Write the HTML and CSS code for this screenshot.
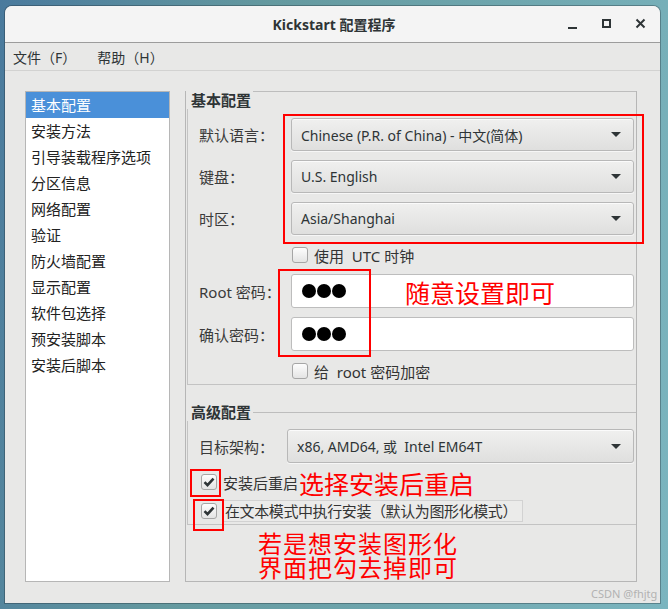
FILE: index.html
```html
<!DOCTYPE html>
<html lang="zh-CN">
<head>
    <meta charset="UTF-8">
    <title>Kickstart 配置程序</title>
    <link rel="stylesheet" href="styles.css">
</head>
<body>
<div class="window">
    <div class="titlebar">
        <span></span>
        <span class="title">Kickstart 配置程序</span>
        <div class="wbtns">
            <span class="wbtn"><svg width="12" height="12" viewBox="0 0 12 12"><path d="M1 10h9" stroke="#2e3436" stroke-width="2"/></svg></span>
            <span class="wbtn"><svg width="12" height="12" viewBox="0 0 12 12"><rect x="2" y="2" width="7" height="7" fill="none" stroke="#2e3436" stroke-width="2"/></svg></span>
            <span class="wbtn"><svg width="12" height="12" viewBox="0 0 12 12"><path d="M1.5 1.5l8 8M9.5 1.5l-8 8" stroke="#2e3436" stroke-width="2"/></svg></span>
        </div>
    </div>
    <div class="menubar">
        <span class="menu-item">文件（F）</span>
        <span class="menu-item">帮助（H）</span>
    </div>
    <div class="content">
        <div class="sidebar">
            <div class="nav-item active">基本配置</div>
            <div class="nav-item">安装方法</div>
            <div class="nav-item">引导装载程序选项</div>
            <div class="nav-item">分区信息</div>
            <div class="nav-item">网络配置</div>
            <div class="nav-item">验证</div>
            <div class="nav-item">防火墙配置</div>
            <div class="nav-item">显示配置</div>
            <div class="nav-item">软件包选择</div>
            <div class="nav-item">预安装脚本</div>
            <div class="nav-item">安装后脚本</div>
        </div>
        <div class="panel">
            <div class="group basic">
                <div class="group-head"><span>基本配置</span></div>
                <div class="row row-combo">
                    <span class="label">默认语言：</span>
                    <div class="combo"><span>Chinese (P.R. of China) - 中文(简体)</span><i class="arrow"></i></div>
                </div>
                <div class="row row-combo">
                    <span class="label">键盘：</span>
                    <div class="combo"><span>U.S. English</span><i class="arrow"></i></div>
                </div>
                <div class="row row-combo">
                    <span class="label">时区：</span>
                    <div class="combo"><span>Asia/Shanghai</span><i class="arrow"></i></div>
                </div>
                <div class="row row-check">
                    <span class="check"></span>
                    <span class="check-text">使用&nbsp; UTC 时钟</span>
                </div>
                <div class="row row-pass">
                    <span class="label">Root 密码：</span>
                    <div class="entry"><span class="dot"></span><span class="dot"></span><span class="dot"></span></div>
                </div>
                <div class="row row-pass second">
                    <span class="label">确认密码：</span>
                    <div class="entry"><span class="dot"></span><span class="dot"></span><span class="dot"></span></div>
                </div>
                <div class="row row-check">
                    <span class="check"></span>
                    <span class="check-text">给&nbsp; root 密码加密</span>
                </div>
            </div>
            <div class="group advanced">
                <div class="group-head"><span>高级配置</span></div>
                <div class="row row-arch">
                    <span class="label">目标架构：</span>
                    <div class="combo"><span>x86, AMD64, 或&nbsp; Intel EM64T</span><i class="arrow"></i></div>
                </div>
                <div class="row row-opt">
                    <span class="check checked"><svg width="14" height="14" viewBox="0 0 14 14"><path d="M2.5 7.2l3 3 6-6.6" fill="none" stroke="#2e3436" stroke-width="2.6"/></svg></span>
                    <span class="check-text">安装后重启</span>
                </div>
                <div class="row row-opt focus">
                    <span class="check checked"><svg width="14" height="14" viewBox="0 0 14 14"><path d="M2.5 7.2l3 3 6-6.6" fill="none" stroke="#2e3436" stroke-width="2.6"/></svg></span>
                    <span class="check-text boxed">在文本模式中执行安装（默认为图形化模式）</span>
                </div>
            </div>
        </div>
    </div>
</div>

<div class="mark mark-lang"></div>
<div class="mark mark-pass"></div>
<div class="mark mark-reboot"></div>
<div class="mark mark-text"></div>
<div class="note note-pass">随意设置即可</div>
<div class="note note-reboot">选择安装后重启</div>
<div class="note note-text">
    <div class="note-line">若是想安装图形化</div>
    <div class="note-line">界面把勾去掉即可</div>
</div>
<div class="watermark">CSDN @fhjtg</div>
</body>
</html>
```

FILE: styles.css
```css
body {
    margin: 0;
    width: 668px;
    height: 609px;
    overflow: hidden;
    position: relative;
    box-sizing: border-box;
    padding: 6px 0 0 5px;
    background: linear-gradient(100deg, #4a7a9d 0%, #64999f 35%, #7bb5bf 100%);
    font-family: "Noto Sans", "Noto Sans CJK SC", sans-serif;
    color: #2e3436;
}

.window {
    width: 655px;
    height: 597px;
    display: flex;
    flex-direction: column;
    background-color: #e8e8e7;
    border-radius: 7px 7px 0 0;
    overflow: hidden;
    box-shadow: 0 0 0 1px rgba(30, 40, 50, 0.35);
}

.titlebar {
    height: 36px;
    flex: none;
    display: grid;
    grid-template-columns: 1fr auto 1fr;
    align-items: center;
    background-color: #f4f4f4;
    border-bottom: 1px solid #9c9c9c;
}
.title {
    font-size: 14px;
    font-weight: bold;
    padding-left: 3px;
}
.wbtns {
    justify-self: end;
    display: flex;
    gap: 14px;
    padding-right: 9px;
}
.wbtn {
    width: 20px;
    height: 20px;
    display: flex;
    align-items: center;
    justify-content: center;
}

.menubar {
    height: 27px;
    flex: none;
    display: flex;
    align-items: center;
    gap: 21px;
    padding-left: 8px;
    font-size: 14px;
    border-bottom: 1px solid #d2d2d1;
}

.content {
    flex: 1;
    display: flex;
    gap: 15px;
    padding: 20px 23px 21px 20px;
    min-height: 0;
}

.sidebar {
    width: 145px;
    box-sizing: border-box;
    background-color: #fff;
    border: 1px solid #b6b6b6;
}
.nav-item {
    height: 26px;
    line-height: 26px;
    padding-left: 5px;
    font-size: 15px;
    color: #222;
}
.nav-item.active {
    background-color: #4a90d9;
    color: #fff;
}

.panel {
    flex: 1;
    border: 1px solid #b6b6b6;
    border-top: none;
    display: flex;
    flex-direction: column;
}

.group {
    margin-left: 1px;
    border-left: 1px solid #c3c3c3;
    border-bottom: 1px solid #c3c3c3;
    display: flex;
    flex-direction: column;
    padding-right: 2px;
}
.group-head {
    height: 18px;
    display: flex;
    align-items: flex-start;
    margin-left: -1px;
    margin-right: -2px;
}
.group-head span {
    font-size: 15px;
    font-weight: bold;
    line-height: 18px;
    padding: 0 2px 0 4px;
    background-color: #e8e8e7;
}
.group-head::after {
    content: "";
    flex: 1;
    border-top: 1px solid #bdbdbd;
}
.basic {
    padding-bottom: 5px;
}
.advanced {
    margin-top: 18px;
    padding-bottom: 2px;
}
.advanced .group-head {
    align-items: center;
}

.row {
    display: flex;
    align-items: center;
}
.label {
    flex: none;
    width: 103px;
    box-sizing: border-box;
    padding-left: 11px;
    font-size: 15px;
    color: #3a3a3a;
}
.row-combo {
    margin-top: 9px;
    height: 33px;
}
.row-check {
    margin-top: 12px;
    height: 16px;
    padding-left: 104px;
}
.row-pass {
    margin-top: 11px;
    height: 34px;
}
.row-pass.second {
    margin-top: 9px;
}
.row-arch {
    margin-top: 8px;
    height: 34px;
}
.row-arch .label {
    width: 99px;
}
.row-opt {
    margin-top: 11px;
    height: 16px;
    padding-left: 13px;
}
.row-opt.focus {
    margin-top: 10px;
    height: 22px;
}

.combo {
    flex: 1;
    height: 100%;
    box-sizing: border-box;
    display: flex;
    align-items: center;
    justify-content: space-between;
    padding: 0 12px 0 9px;
    border: 1px solid #b8b8b8;
    border-radius: 3px;
    background: linear-gradient(#f0f0ef, #dfdfde);
    box-shadow: inset 0 1px #fbfbfb, 0 1px #f6f6f6;
    font-size: 14px;
    color: #2e3436;
}
.arrow {
    width: 0;
    height: 0;
    border-left: 5px solid transparent;
    border-right: 5px solid transparent;
    border-top: 5px solid #2e3436;
}

.entry {
    flex: 1;
    height: 100%;
    box-sizing: border-box;
    display: flex;
    align-items: center;
    gap: 1px;
    padding-left: 10px;
    background-color: #fff;
    border: 1px solid #bdbdbd;
    border-radius: 3px;
}
.dot {
    width: 14px;
    height: 14px;
    border-radius: 50%;
    background-color: #000;
}

.check {
    flex: none;
    width: 16px;
    height: 16px;
    box-sizing: border-box;
    border: 1px solid #a6a6a6;
    border-radius: 3px;
    background: linear-gradient(#fdfdfd, #e4e4e4);
    display: flex;
    align-items: center;
    justify-content: center;
}
.check-text {
    margin-left: 6px;
    font-size: 15px;
    color: #333;
    white-space: nowrap;
}
.row-check .check-text {
    margin-left: 6px;
}
.check-text.boxed {
    margin-left: 5px;
    height: 22px;
    line-height: 20px;
    box-sizing: border-box;
    padding: 0 5px 0 2px;
    letter-spacing: -0.4px;
    border: 1px solid #d2d2d2;
    background-color: #ebebea;
}

.mark {
    position: absolute;
    box-sizing: border-box;
    border: 2px solid #f00;
}
.mark-lang {
    left: 283px;
    top: 114px;
    width: 361px;
    height: 130px;
}
.mark-pass {
    left: 278px;
    top: 269px;
    width: 93px;
    height: 88px;
}
.mark-reboot {
    left: 190px;
    top: 469px;
    width: 31px;
    height: 28px;
}
.mark-text {
    left: 193px;
    top: 499px;
    width: 31px;
    height: 32px;
}

.note {
    position: absolute;
    color: #f00;
    font-family: "Noto Sans CJK SC", sans-serif;
    font-size: 25px;
    line-height: 25px;
    white-space: nowrap;
}
.note-pass {
    left: 405px;
    top: 280px;
}
.note-reboot {
    left: 299px;
    top: 471px;
}
.note-text {
    left: 258px;
    top: 531px;
    font-size: 24px;
    letter-spacing: 1px;
}
.note-line {
    height: 24px;
    line-height: 24px;
}

.watermark {
    position: absolute;
    left: 591px;
    top: 586px;
    font-size: 11px;
    color: #b2b2b2;
}
```
